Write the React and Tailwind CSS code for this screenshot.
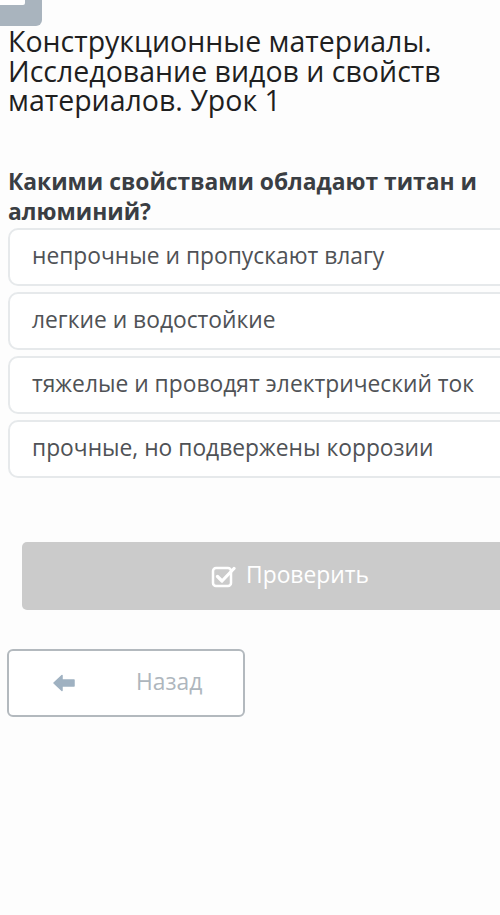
const options = [
  'непрочные и пропускают влагу',
  'легкие и водостойкие',
  'тяжелые и проводят электрический ток',
  'прочные, но подвержены коррозии',
];

export default function App() {
  return (
    <div className="w-[500px] h-[915px] overflow-hidden bg-[#fdfdfd] font-['Open_Sans',sans-serif]">
      {/* tab stub */}
      <div className="w-[42px] h-[26px] rounded-br-[6px] bg-[#a9b4be]">
        <div className="w-[25px] h-[5px] rounded-br-[2px] bg-white" />
      </div>

      <h1 className="mt-[1px] px-[8px] text-[28.5px] leading-[29.5px] text-[#1f1f1f] font-normal">
        Конструкционные материалы. Исследование видов и свойств материалов. Урок 1
      </h1>

      <p className="mt-[51px] px-[8px] text-[22.8px] leading-[30px] font-bold text-[#3a3e43]">
        Какими свойствами обладают титан и алюминий?
      </p>

      <div className="mt-[1px] ml-[8px] flex flex-col gap-[6px]">
        {options.map((o) => (
          <div
            key={o}
            className="w-[520px] h-[58px] rounded-[10px] border-2 border-[#e6e9eb] bg-white flex items-center pl-[22px] text-[22.8px] text-[#4f5256]"
          >
            {o}
          </div>
        ))}
      </div>

      <div className="mt-[64px] ml-[22px] w-[536px] h-[68px] rounded-[5px] bg-[#cbcbcb] flex items-center justify-center gap-[10px] text-white text-[22.8px]">
        <svg width="25" height="24" viewBox="0 0 25 24" fill="none">
          <rect x="2" y="4" width="18" height="18" rx="3" stroke="white" strokeWidth="2.5" />
          <path d="M6.5 12.5l4.5 4.5L23 4.5" stroke="white" strokeWidth="3.2" strokeLinecap="round" strokeLinejoin="round" />
        </svg>
        <span>Проверить</span>
      </div>

      <div className="mt-[39px] ml-[7px] w-[238px] h-[68px] rounded-[6px] border-2 border-[#b3b9be] bg-white flex items-center">
        <svg className="ml-[43px]" width="24" height="20" viewBox="0 0 24 20">
          <path d="M2 10 L10 2.5 L10 7 L22 7 L22 13 L10 13 L10 17.5 Z" fill="#9fb1c1" strokeLinejoin="round" stroke="#9fb1c1" strokeWidth="1.5" />
        </svg>
        <span className="ml-[60px] text-[22.8px] text-[#aeb6bd]">Назад</span>
      </div>
    </div>
  );
}
